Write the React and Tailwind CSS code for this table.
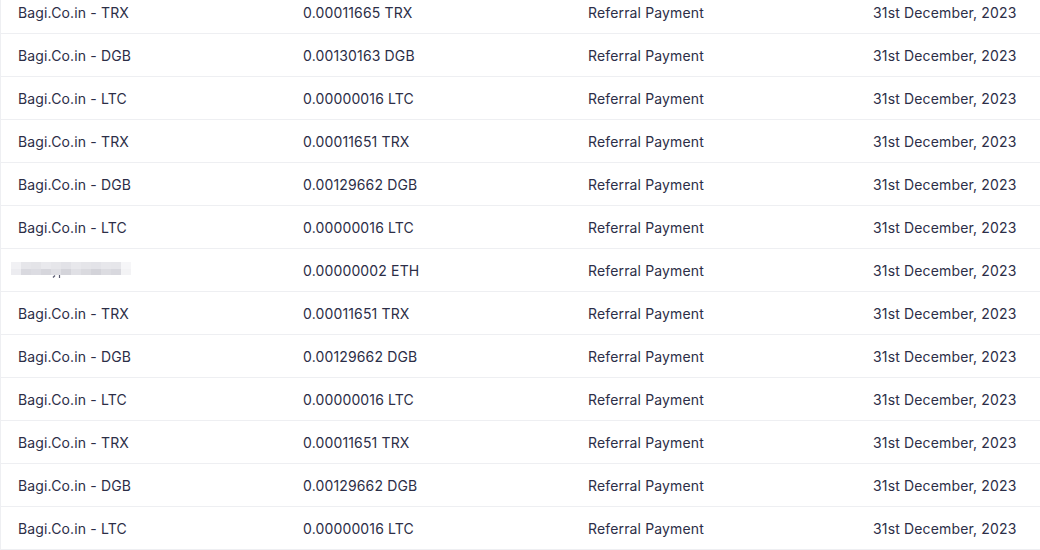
const rows = [
    ["Bagi.Co.in - TRX", "0.00011665 TRX"],
    ["Bagi.Co.in - DGB", "0.00130163 DGB"],
    ["Bagi.Co.in - LTC", "0.00000016 LTC"],
    ["Bagi.Co.in - TRX", "0.00011651 TRX"],
    ["Bagi.Co.in - DGB", "0.00129662 DGB"],
    ["Bagi.Co.in - LTC", "0.00000016 LTC"],
    [null, "0.00000002 ETH"],
    ["Bagi.Co.in - TRX", "0.00011651 TRX"],
    ["Bagi.Co.in - DGB", "0.00129662 DGB"],
    ["Bagi.Co.in - LTC", "0.00000016 LTC"],
    ["Bagi.Co.in - TRX", "0.00011651 TRX"],
    ["Bagi.Co.in - DGB", "0.00129662 DGB"],
    ["Bagi.Co.in - LTC", "0.00000016 LTC"],
];

// pixelated (mosaic) name in the censored row
const topShades = ["#f1f1f4", "#e6e6ea", "#e4e4e8", "#e9e9ed", "#e6e6ea", "#e2e2e7", "#e8e8ec", "#e5e5e9", "#e3e3e8", "#e7e7eb", "#e6e6ea", "#f6f6f8"];
const botShades = ["#ececf0", "#d9d9df", "#dcdce2", "#d6d6dc", "#dfdfe4", "#d4d4da", "#e0e0e5", "#dadadf", "#d3d3d9", "#dcdce1", "#d8d8de", "#f3f3f5"];

function Mosaic() {
    return (
        <svg width="140" height="20" viewBox="0 0 140 20" className="block">
            {topShades.map((c, i) => (
                <rect key={"t" + i} x={10 + i * 10} y="2" width="10" height="7" fill={c} />
            ))}
            {botShades.map((c, i) => (
                <rect key={"b" + i} x={10 + i * 10} y="9" width="10" height="6" fill={c} />
            ))}
            <path d="M52 17.5 L54 15.5" stroke="#5b5c72" strokeWidth="1.2" />
            <path d="M58.5 15 L58.5 18" stroke="#5b5c72" strokeWidth="1.2" />
        </svg>
    );
}

export default function App() {
    return (
        <div
            className="w-[1040px] h-[550px] overflow-hidden bg-white text-[14px] tracking-[0.15px] text-[#2c2e47]"
            style={{ fontFamily: "Inter, 'Liberation Sans', sans-serif" }}
        >
            <div className="-mt-[9px] w-[1140px] border-l border-[#eeeff2]">
                {rows.map(([name, amount], i) => (
                    <div
                        key={i}
                        className="grid grid-cols-[285px_285px_285px_285px] h-[43px] items-center border-b border-[#eeeff2]"
                    >
                        <div className="pl-[17px]">
                            {name ? name : (
                                <div className="-ml-[17px]">
                                    <Mosaic />
                                </div>
                            )}
                        </div>
                        <div className="pl-[17px]">{amount}</div>
                        <div className="pl-[17px]">Referral Payment</div>
                        <div className="pl-[17px]">31st December, 2023</div>
                    </div>
                ))}
            </div>
        </div>
    );
}
